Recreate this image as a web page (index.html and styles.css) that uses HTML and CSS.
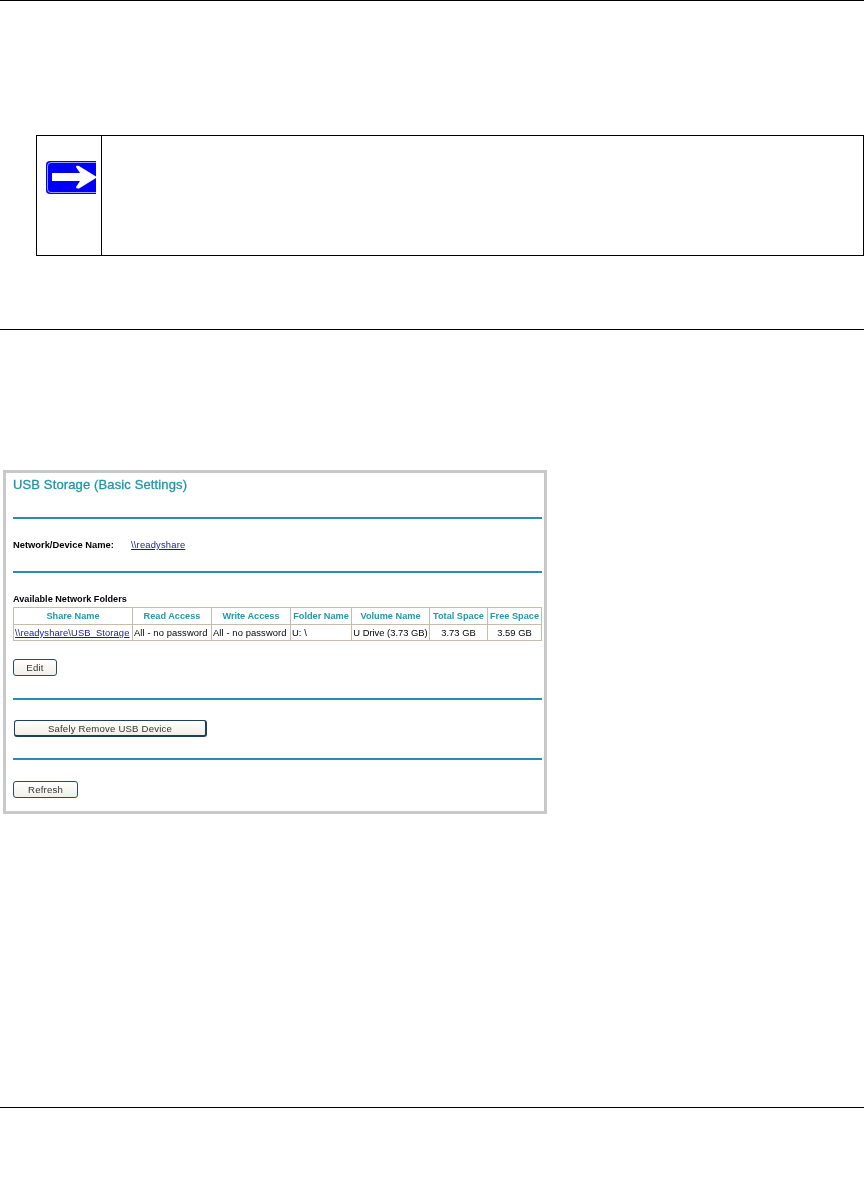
FILE: index.html
```html
<!DOCTYPE html>
<html lang="en">
<head>
<meta charset="utf-8">
<title>USB Storage (Basic Settings)</title>
<link rel="stylesheet" href="styles.css">
</head>
<body>
<div class="page">
  <hr class="rule rule-top">
  <div class="note">
    <div class="note-icon">
      <svg width="50" height="33" viewBox="0 0 50 33" aria-hidden="true">
        <path d="M50 0H4Q0 0 0 4V29Q0 33 4 33H50Z" fill="#0000fa"/>
        <path d="M50 1.5H5Q1.5 1.5 1.5 5V28Q1.5 31.5 5 31.5H50" fill="none" stroke="#dfe6ff" stroke-width="0.7"/>
        <path d="M6 12H34L30 6Q30 4 33 5L50 15.5V17L33 27.5Q30 28 30 26L34 20H6Z" fill="#fff"/>
      </svg>
    </div>
    <div class="note-body"></div>
  </div>
  <hr class="rule rule-mid">
  <section class="shot">
    <h1 class="shot-title">USB Storage (Basic Settings)</h1>
    <hr class="teal teal-1">
    <div class="device-row"><b>Network/Device Name:</b><a href="#">\\readyshare</a></div>
    <hr class="teal teal-2">
    <h2 class="folders-title">Available Network Folders</h2>
    <table class="folders">
      <colgroup>
        <col class="c1"><col class="c2"><col class="c3"><col class="c4"><col class="c5"><col class="c6"><col class="c7">
      </colgroup>
      <thead>
        <tr><th>Share Name</th><th>Read Access</th><th>Write Access</th><th>Folder Name</th><th>Volume Name</th><th>Total Space</th><th>Free Space</th></tr>
      </thead>
      <tbody>
        <tr><td><a href="#">\\readyshare\USB_Storage</a></td><td>All - no password</td><td>All - no password</td><td>U: \</td><td class="mid">U Drive (3.73 GB)</td><td class="mid">3.73 GB</td><td class="mid">3.59 GB</td></tr>
      </tbody>
    </table>
    <button class="btn btn-edit" type="button">Edit</button>
    <hr class="teal teal-3">
    <button class="btn btn-remove" type="button">Safely Remove USB Device</button>
    <hr class="teal teal-4">
    <button class="btn btn-refresh" type="button">Refresh</button>
  </section>
  <hr class="rule rule-bottom">
</div>
</body>
</html>
```
FILE: styles.css
```css
html, body { margin: 0; padding: 0; background: #fff; }
body { font-family: "Liberation Sans", Arial, sans-serif; color: #000; }
.page { width: 865px; height: 1184px; overflow: hidden; }
.rule { border: 0; height: 1px; background: #000; margin: 0; width: 864px; }
.note {
  display: flex; box-sizing: border-box;
  width: 828px; height: 121px;
  margin: 134px 0 0 36px;
  border: 1px solid #000;
}
.note-icon {
  box-sizing: border-box; width: 65px; flex: none;
  border-right: 1px solid #000;
  padding: 25px 0 0 9px;
}
.note-icon svg { display: block; }
.note-body { flex: 1; }
.rule-mid { margin-top: 73px; }
.shot {
  box-sizing: border-box; width: 544px; height: 344px;
  margin: 140px 0 0 3px;
  padding: 5px 2px 0 7px;
  border: 3px solid #c8c8c8;
  filter: blur(0.4px);
}
.shot-title {
  margin: 0; font-size: 13px; font-weight: 400; line-height: 14px;
  color: #1f95a8; letter-spacing: 0.13px; -webkit-text-stroke: 0.3px #1f95a8;
}
.teal { border: 0; height: 2px; background: #2a8cb0; margin: 0; }
.teal-1 { margin-top: 25px; }
.device-row {
  display: flex; margin-top: 20px; height: 12px; font-size: 9.35px; line-height: 12px;
}
.device-row b { width: 118px; }
.device-row a { letter-spacing: 0.2px; }
.device-row a, .folders a { color: #1a1a8c; text-decoration: underline; }
.teal-2 { margin-top: 20px; }
.folders-title { margin: 20px 0 0; font-size: 9.15px; line-height: 12px; font-weight: 700; }
.folders {
  border-collapse: collapse; table-layout: fixed; width: 528px; margin-top: 2px;
  font-size: 9.4px; letter-spacing: 0.1px;
}
.c1 { width: 119px; } .c2, .c3 { width: 79px; } .c4 { width: 61px; }
.c5 { width: 78px; } .c6 { width: 58px; } .c7 { width: 54px; }
.folders th, .folders td {
  border: 1px solid #c4bcae; padding: 0 1px; white-space: nowrap; overflow: hidden;
}
.folders th { height: 16px; color: #2597ad; font-weight: 700; text-align: center; font-size: 9.2px; letter-spacing: 0; }
.folders td { height: 15px; text-align: left; }
.folders td.mid { text-align: center; letter-spacing: 0; }
.btn {
  display: block; box-sizing: border-box; padding: 0; height: 17px;
  font: 400 9.6px/13px "Liberation Sans", Arial, sans-serif; letter-spacing: 0.2px; color: #333;
  background: linear-gradient(#fff, #f1efe6);
  border: 1px solid #2b4a66; border-radius: 3px;
}
.btn-edit { width: 44px; margin-top: 18px; }
.teal-3 { margin-top: 22px; }
.btn-remove { width: 193px; margin: 20px 0 0 1px; border-width: 1px 2px 2px 1px; border-color: #1c3f5e; }
.teal-4 { margin-top: 21px; }
.btn-refresh { width: 65px; margin-top: 21px; }
.rule-bottom { margin-top: 293px; }
```
